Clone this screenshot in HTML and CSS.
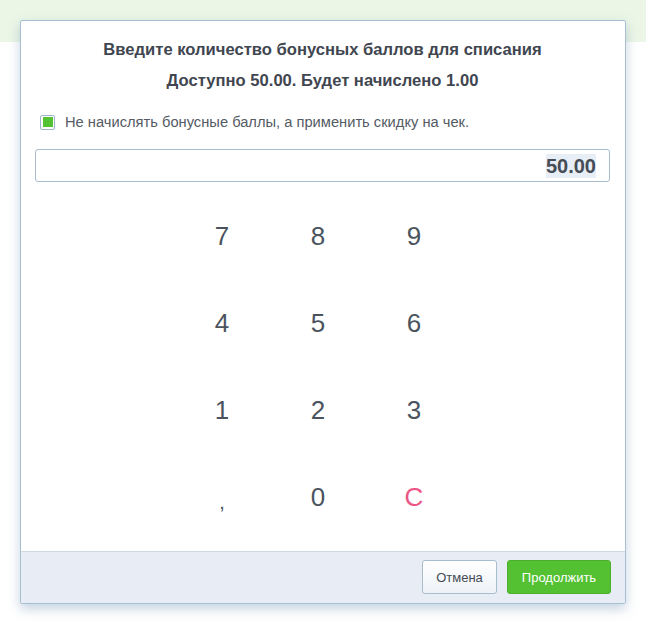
FILE: index.html
```html
<!DOCTYPE html>
<html lang="ru">
<head>
<meta charset="utf-8">
<link rel="stylesheet" href="styles.css">
</head>
<body>
<div class="band"></div>
<div class="modal">
  <div class="body">
    <div class="title">Введите количество бонусных баллов для списания</div>
    <div class="title second">Доступно 50.00. Будет начислено 1.00</div>
    <label class="check">
      <span class="box"><span class="mark"></span></span>
      <span class="label">Не начислять бонусные баллы, а применить скидку на чек.</span>
    </label>
    <div class="input"><span class="value">50.00</span></div>
    <div class="keypad">
      <div class="key">7</div><div class="key">8</div><div class="key">9</div>
      <div class="key">4</div><div class="key">5</div><div class="key">6</div>
      <div class="key">1</div><div class="key">2</div><div class="key">3</div>
      <div class="key comma">,</div><div class="key">0</div><div class="key clear">C</div>
    </div>
  </div>
  <div class="footer">
    <button class="btn cancel">Отмена</button>
    <button class="btn ok">Продолжить</button>
  </div>
</div>
</body>
</html>
```
FILE: styles.css
```css
html, body {
  margin: 0;
  padding: 0;
  background: #ffffff;
  font-family: "Liberation Sans", Arial, sans-serif;
}
body {
  position: relative;
  width: 646px;
  height: 625px;
  overflow: hidden;
}
.band {
  height: 42px;
  background: #ebf6e6;
}
.modal {
  position: absolute;
  left: 20px;
  top: 20px;
  width: 604px;
  background: #fff;
  border: 1px solid #a6bfd2;
  border-radius: 2px;
  box-shadow: 0 5px 12px rgba(90, 130, 170, 0.35);
}
.body {
  padding: 20px 15px 10px 14px;
}
.title {
  text-align: center;
  font-weight: bold;
  font-size: 16.6px;
  color: #3f4650;
  line-height: 18px;
}
.second {
  margin-top: 13px;
}
.check {
  display: flex;
  align-items: center;
  margin-top: 24px;
  padding-left: 5px;
}
.box {
  width: 13px;
  height: 13px;
  border: 1px solid #9fb6c8;
  border-radius: 2px;
  display: flex;
  align-items: center;
  justify-content: center;
  background: #fff;
}
.mark {
  width: 10px;
  height: 10px;
  background: #55c234;
}
.label {
  margin-left: 10px;
  font-size: 14.7px;
  color: #545b64;
}
.input {
  margin-top: 19px;
  height: 31px;
  border: 1px solid #a9bccd;
  border-radius: 3px;
  display: flex;
  align-items: center;
  justify-content: flex-end;
  padding-right: 13px;
}
.value {
  font-size: 20px;
  font-weight: bold;
  color: #454c55;
  background: #e8eef6;
  line-height: 24px;
}
.keypad {
  margin-top: 11px;
  display: grid;
  grid-template-columns: repeat(3, 96px);
  grid-auto-rows: 87px;
  justify-content: center;
  padding-right: 9px;
}
.key {
  display: flex;
  align-items: center;
  justify-content: center;
  font-size: 26px;
  color: #4b545e;
}
.comma {
  padding-top: 10px;
  font-size: 20px;
}
.clear {
  color: #ec5584;
}
.footer {
  background: #e8edf5;
  border-top: 1px solid #cfd9e3;
  display: flex;
  justify-content: flex-end;
  gap: 10px;
  padding: 8px 14px 9px 0;
}
.btn {
  height: 34px;
  font-family: "Liberation Sans", Arial, sans-serif;
  font-size: 13px;
  border-radius: 3px;
  cursor: pointer;
}
.cancel {
  width: 75px;
  background: linear-gradient(#ffffff, #eef2f7);
  border: 1px solid #a7bccd;
  color: #454c55;
}
.ok {
  width: 104px;
  background: #53c132;
  border: 1px solid #4db02d;
  color: #ffffff;
}
```
